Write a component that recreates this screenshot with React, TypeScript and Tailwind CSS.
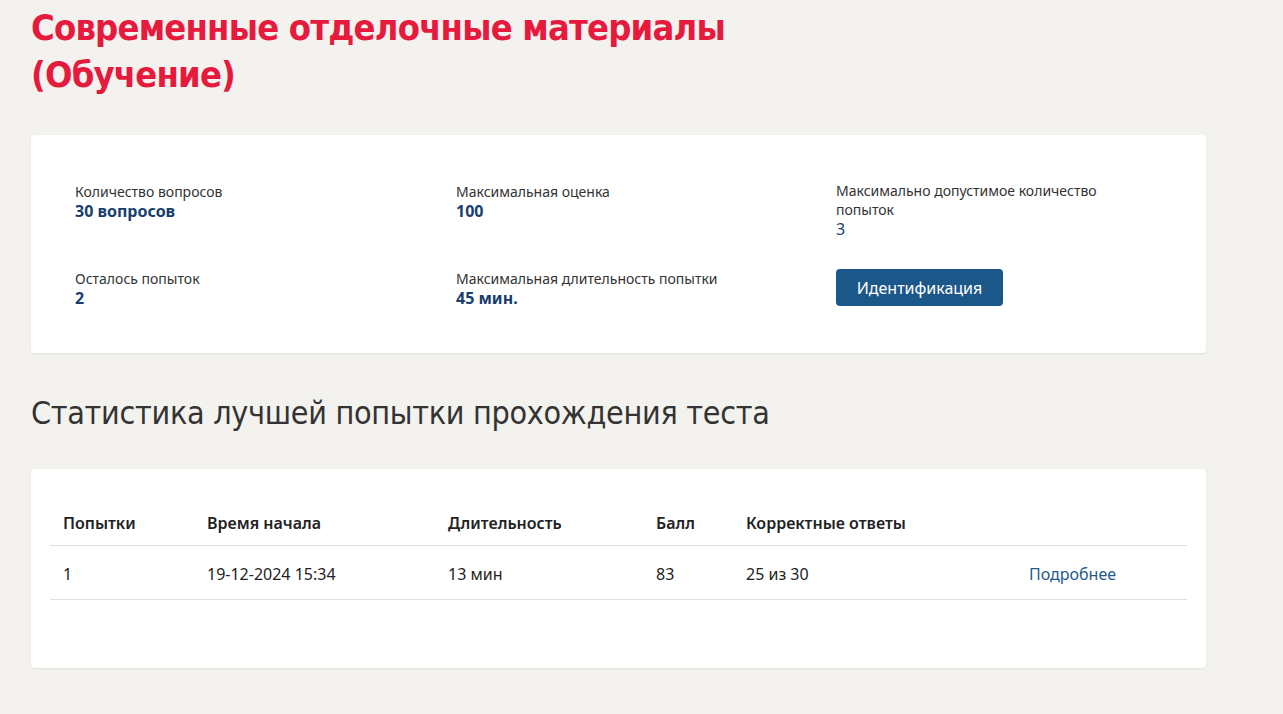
import React from "react";

const body = { fontFamily: '"Segoe UI", "Noto Sans", sans-serif' };
const cond = { fontFamily: '"DejaVu Sans Condensed", "Liberation Sans Narrow", sans-serif' };

function Stat({ label, value }: { label: string; value: string }) {
  return (
    <div>
      <div className="text-[14px] leading-[19px] text-[#333333]">{label}</div>
      <div className="text-[16px] leading-[21px] font-bold text-[#173e6d]">{value}</div>
    </div>
  );
}

export default function App() {
  return (
    <div className="min-h-[714px] bg-[#f3f2ef] px-[31px] pt-[4px] pb-[40px]" style={body}>
      <h1 className="w-[760px] text-[36px] leading-[47px] font-bold tracking-[-0.8px] text-[#e61a3d]" style={cond}>
        Современные отделочные материалы (Обучение)
      </h1>

      <div className="mt-[37px] w-[1175px] rounded-[4px] bg-white shadow-[0_1px_2px_rgba(0,0,0,0.08)] pl-[44px] pt-[47px] pb-[44px]">
        <div className="grid grid-cols-[381px_380px_1fr] gap-y-[29px]">
          <Stat label="Количество вопросов" value="30 вопросов" />
          <Stat label="Максимальная оценка" value="100" />
          <div className="w-[290px] -mt-[1px]">
            <div className="text-[14px] leading-[19px] text-[#333333]">Максимально допустимое количество попыток</div>
            <div className="text-[16px] leading-[21px] text-[#173e6d]">3</div>
          </div>
          <Stat label="Осталось попыток" value="2" />
          <Stat label="Максимальная длительность попытки" value="45 мин." />
          <div>
            <button className="h-[37px] w-[167px] rounded-[4px] bg-[#1b5789] text-[16px] text-white">
              Идентификация
            </button>
          </div>
        </div>
      </div>

      <h2 className="mt-[38px] text-[32px] leading-[44px] font-light tracking-[-0.3px] text-[#333333]" style={cond}>
        Статистика лучшей попытки прохождения теста
      </h2>

      <div className="mt-[34px] w-[1175px] rounded-[4px] bg-white shadow-[0_1px_2px_rgba(0,0,0,0.08)] px-[19px] pt-[31px] pb-[68px]">
        <table className="w-full table-fixed border-collapse text-left text-[16px] text-[#222222]">
          <thead>
            <tr className="border-b border-[#dedede]">
              <th className="w-[157px] pl-[13px] pt-[11px] pb-[10px] font-semibold">Попытки</th>
              <th className="w-[241px] pt-[11px] pb-[10px] font-semibold">Время начала</th>
              <th className="w-[208px] pt-[11px] pb-[10px] font-semibold">Длительность</th>
              <th className="w-[90px] pt-[11px] pb-[10px] font-semibold">Балл</th>
              <th className="w-[283px] pt-[11px] pb-[10px] font-semibold">Корректные ответы</th>
              <th className="pt-[11px] pb-[10px]"></th>
            </tr>
          </thead>
          <tbody>
            <tr className="border-b border-[#dedede]">
              <td className="pl-[13px] pt-[16px] pb-[13px]">1</td>
              <td className="pt-[16px] pb-[13px]">19-12-2024 15:34</td>
              <td className="pt-[16px] pb-[13px]">13 мин</td>
              <td className="pt-[16px] pb-[13px]">83</td>
              <td className="pt-[16px] pb-[13px]">25 из 30</td>
              <td className="pt-[16px] pb-[13px] text-[#1f5a8c]">Подробнее</td>
            </tr>
          </tbody>
        </table>
      </div>
    </div>
  );
}
